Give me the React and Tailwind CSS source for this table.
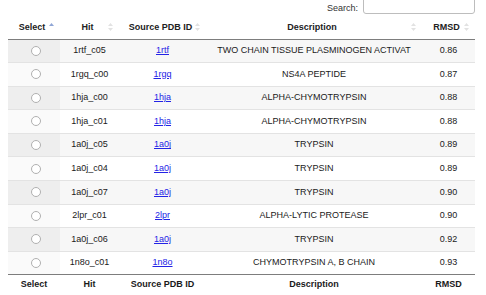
import React from 'react'

const rows = [
    { hit: '1rtf_c05', pdb: '1rtf', desc: 'TWO CHAIN TISSUE PLASMINOGEN ACTIVAT', rmsd: '0.86' },
    { hit: '1rgq_c00', pdb: '1rgq', desc: 'NS4A PEPTIDE', rmsd: '0.87' },
    { hit: '1hja_c00', pdb: '1hja', desc: 'ALPHA-CHYMOTRYPSIN', rmsd: '0.88' },
    { hit: '1hja_c01', pdb: '1hja', desc: 'ALPHA-CHYMOTRYPSIN', rmsd: '0.88' },
    { hit: '1a0j_c05', pdb: '1a0j', desc: 'TRYPSIN', rmsd: '0.89' },
    { hit: '1a0j_c04', pdb: '1a0j', desc: 'TRYPSIN', rmsd: '0.89' },
    { hit: '1a0j_c07', pdb: '1a0j', desc: 'TRYPSIN', rmsd: '0.90' },
    { hit: '2lpr_c01', pdb: '2lpr', desc: 'ALPHA-LYTIC PROTEASE', rmsd: '0.90' },
    { hit: '1a0j_c06', pdb: '1a0j', desc: 'TRYPSIN', rmsd: '0.92' },
    { hit: '1n8o_c01', pdb: '1n8o', desc: 'CHYMOTRYPSIN A, B CHAIN', rmsd: '0.93' },
]

const SortIcon = ({ active }) => (
    <svg width="5" height="9" viewBox="0 0 5 9" className="absolute right-[6px] top-1/2 -translate-y-1/2">
        <path d="M0 3.5 L2.5 0.5 L5 3.5 Z" fill={active ? '#8fa6d6' : '#e2e2e2'} />
        {!active && <path d="M0 5.5 L2.5 8.5 L5 5.5 Z" fill="#e2e2e2" />}
    </svg>
)

const HeadCell = ({ label, sort, active }) => (
    <th className="relative h-[23px] p-0 text-center font-bold text-[9px] text-[#222]">
        <span className="pr-[4px]">{label}</span>
        {sort && <SortIcon active={active} />}
    </th>
)

const App = () => {
    return (
        <div className="w-[486px] h-[295px] overflow-hidden bg-white font-['Liberation_Sans',Arial,sans-serif] text-[9px] text-[#1a1a1a]">
            {/* Search box */}
            <div className="h-[16px] flex items-start justify-end gap-[5px] pr-[11px]">
                <span className="mt-[2px] text-[9px] text-[#333]">Search:</span>
                <div className="w-[112px] h-[20px] -mt-[6px] border border-[#bdbdbd] rounded-[3px] bg-white"></div>
            </div>

            <table className="ml-[8px] w-[467px] table-fixed border-collapse">
                <colgroup>
                    <col className="w-[52px]" />
                    <col className="w-[59px]" />
                    <col className="w-[87px]" />
                    <col className="w-[216px]" />
                    <col className="w-[53px]" />
                </colgroup>
                <thead>
                    <tr className="border-b border-[#7d7d7d]">
                        <HeadCell label="Select" sort active />
                        <HeadCell label="Hit" sort />
                        <HeadCell label="Source PDB ID" sort />
                        <HeadCell label="Description" sort />
                        <HeadCell label="RMSD" sort />
                    </tr>
                </thead>
                <tbody>
                    {rows.map((r, i) => {
                        const odd = i % 2 === 0
                        return (
                            <tr key={i} className={`${i > 0 ? 'border-t border-[#e3e3e3]' : ''} ${odd ? 'bg-[#f7f7f7]' : 'bg-white'}`}>
                                <td className={`h-[23.6px] p-0 text-center ${odd ? 'bg-[#eeeeee]' : 'bg-[#fafafa]'}`}>
                                    <span className="inline-block align-middle w-[10px] h-[10px] ml-[3px] rounded-full border border-[#b0b0b0] bg-white"></span>
                                </td>
                                <td className="p-0 text-center">{r.hit}</td>
                                <td className="p-0 text-center">
                                    <a className="text-[#2323e6] underline">{r.pdb}</a>
                                </td>
                                <td className="p-0 text-center whitespace-nowrap overflow-hidden">{r.desc}</td>
                                <td className="p-0 text-center">{r.rmsd}</td>
                            </tr>
                        )
                    })}
                </tbody>
                <tfoot>
                    <tr className="border-t border-[#7d7d7d]">
                        <th className="h-[20px] p-0 text-center font-bold text-[9px]">Select</th>
                        <th className="p-0 text-center font-bold text-[9px]">Hit</th>
                        <th className="p-0 text-center font-bold text-[9px]">Source PDB ID</th>
                        <th className="p-0 text-center font-bold text-[9px]">Description</th>
                        <th className="p-0 text-center font-bold text-[9px]">RMSD</th>
                    </tr>
                </tfoot>
            </table>
        </div>
    )
}

export default App
